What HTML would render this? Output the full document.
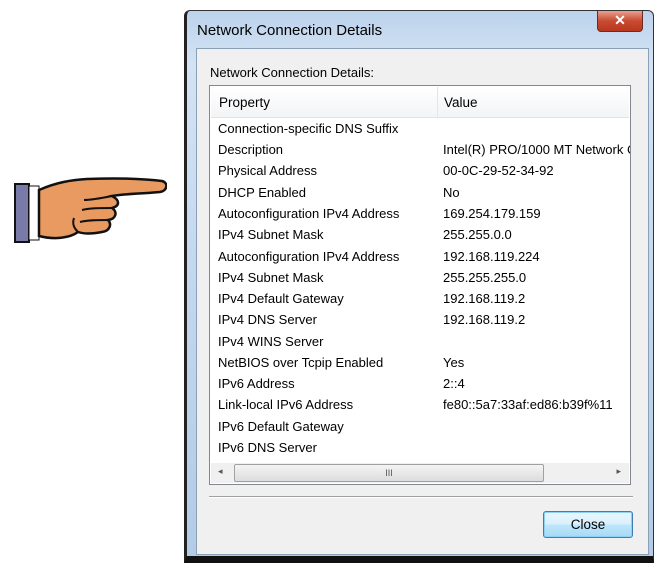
<!DOCTYPE html>
<html><head><style>
body{margin:0;width:659px;height:573px;background:#fff;position:relative;overflow:hidden;font-family:"Liberation Sans",sans-serif;}
.win{position:absolute;left:184px;top:10px;width:470px;height:553px;background:linear-gradient(180deg,#bcd3ec 0%,#d4e3f3 10%,#c3d7ee 50%,#b4cbe6 100%);border:1px solid #333;border-left:3px solid #222;border-bottom:7px solid #111;border-radius:6px 6px 0 0;box-sizing:border-box;}
.title{position:absolute;left:10px;top:11px;font-size:15px;color:#000;}
.xbtn{position:absolute;right:10px;top:0;width:44px;height:20px;background:linear-gradient(#e8a090,#c84a30 50%,#b83820);border:1px solid #6b2b20;border-top:none;border-radius:0 0 4px 4px;color:#fff;font-weight:bold;text-align:center;font-size:14px;line-height:19px;}
.client{position:absolute;left:9px;top:37px;width:451px;height:505px;background:#f0f0f0;border:1px solid #8aa0b8;}
.lbl{position:absolute;left:13px;top:16px;font-size:13px;}
.lv{position:absolute;left:12px;top:36px;width:422px;height:400px;background:#fff;border:1px solid #828790;box-sizing:border-box;}
.hdr{position:absolute;left:1px;top:1px;right:1px;height:30px;background:linear-gradient(#fff,#f3f4f6);border-bottom:1px solid #e0e3e8;font-size:13.5px;}
.hdr span{position:absolute;top:8px;}
.sep{position:absolute;left:226px;top:0;width:1px;height:30px;background:#e3e5e8;}
.row{position:absolute;left:8px;font-size:13px;white-space:nowrap;}
.v{position:absolute;left:233px;font-size:13px;white-space:nowrap;width:187px;overflow:hidden;}
.sb{position:absolute;left:1px;bottom:1px;right:1px;height:20px;background:#f0f0f0;}
.thumb{position:absolute;left:23px;top:1px;width:308px;height:16px;border:1px solid #a0a0a0;border-radius:2px;background:linear-gradient(#f4f4f4,#dcdcdc);font-size:9px;text-align:center;line-height:16px;color:#555;}
.hr{position:absolute;left:12px;top:447px;width:424px;height:1px;background:#a0a0a0;border-bottom:1px solid #fff;}
.close{position:absolute;left:346px;top:462px;width:88px;height:25px;border:1px solid #3c7fb1;border-radius:3px;background:linear-gradient(#eaf6fd,#d9f0fc 50%,#bee6fd 51%,#a7d9f5);font-size:13.5px;text-align:center;line-height:25px;box-shadow:inset 0 0 0 1px #8fd0f5;}
</style></head><body>
<svg style="position:absolute;left:12px;top:172px" width="155" height="74" viewBox="0 0 155 74">
<rect x="3" y="12" width="14" height="58" fill="#7a7aa8" stroke="#111" stroke-width="2"/>
<rect x="17" y="14" width="10" height="54" fill="#fff" stroke="#111" stroke-width="1"/>
<path d="M27 18 C45 10 60 8 75 7 C100 6 125 6 150 9 C157 11 155 19 148 20 C125 22 110 22 100 24 C108 28 108 34 100 36 C106 40 104 47 96 48 C100 52 98 59 90 60 C80 62 72 62 66 60 C58 66 42 68 27 64 Z" fill="#e89a60" stroke="#111" stroke-width="2.5"/>
<path d="M100 24 C90 26 80 28 72 28 M100 36 C88 36 78 36 70 38 M96 48 C86 48 76 48 68 50 M66 60 C62 56 60 52 62 46" fill="none" stroke="#111" stroke-width="2"/>
</svg>
<div class="win">
<div class="title">Network Connection Details</div>
<div class="xbtn">✕</div>
<div class="client">
<div class="lbl">Network Connection Details:</div>
<div class="lv">
<div class="hdr"><span style="left:8px">Property</span><div class="sep"></div><span style="left:233px">Value</span></div>
<div class="row" style="top:35px">Connection-specific DNS Suffix</div>
<div class="row" style="top:56px">Description</div><div class="v" style="top:56px">Intel(R) PRO/1000 MT Network Connection</div>
<div class="row" style="top:77px">Physical Address</div><div class="v" style="top:77px">00-0C-29-52-34-92</div>
<div class="row" style="top:99px">DHCP Enabled</div><div class="v" style="top:99px">No</div>
<div class="row" style="top:120px">Autoconfiguration IPv4 Address</div><div class="v" style="top:120px">169.254.179.159</div>
<div class="row" style="top:141px">IPv4 Subnet Mask</div><div class="v" style="top:141px">255.255.0.0</div>
<div class="row" style="top:163px">Autoconfiguration IPv4 Address</div><div class="v" style="top:163px">192.168.119.224</div>
<div class="row" style="top:184px">IPv4 Subnet Mask</div><div class="v" style="top:184px">255.255.255.0</div>
<div class="row" style="top:205px">IPv4 Default Gateway</div><div class="v" style="top:205px">192.168.119.2</div>
<div class="row" style="top:226px">IPv4 DNS Server</div><div class="v" style="top:226px">192.168.119.2</div>
<div class="row" style="top:248px">IPv4 WINS Server</div>
<div class="row" style="top:269px">NetBIOS over Tcpip Enabled</div><div class="v" style="top:269px">Yes</div>
<div class="row" style="top:290px">IPv6 Address</div><div class="v" style="top:290px">2::4</div>
<div class="row" style="top:311px">Link-local IPv6 Address</div><div class="v" style="top:311px">fe80::5a7:33af:ed86:b39f%11</div>
<div class="row" style="top:333px">IPv6 Default Gateway</div>
<div class="row" style="top:354px">IPv6 DNS Server</div>
<div class="sb"><span style="position:absolute;left:7px;top:3px;font-size:9px;color:#555">◂</span><div class="thumb">III</div><span style="position:absolute;right:8px;top:3px;font-size:9px;color:#555">▸</span></div>
</div>
<div class="hr"></div>
<div class="close">Close</div>
</div>
</div>
</body></html>
